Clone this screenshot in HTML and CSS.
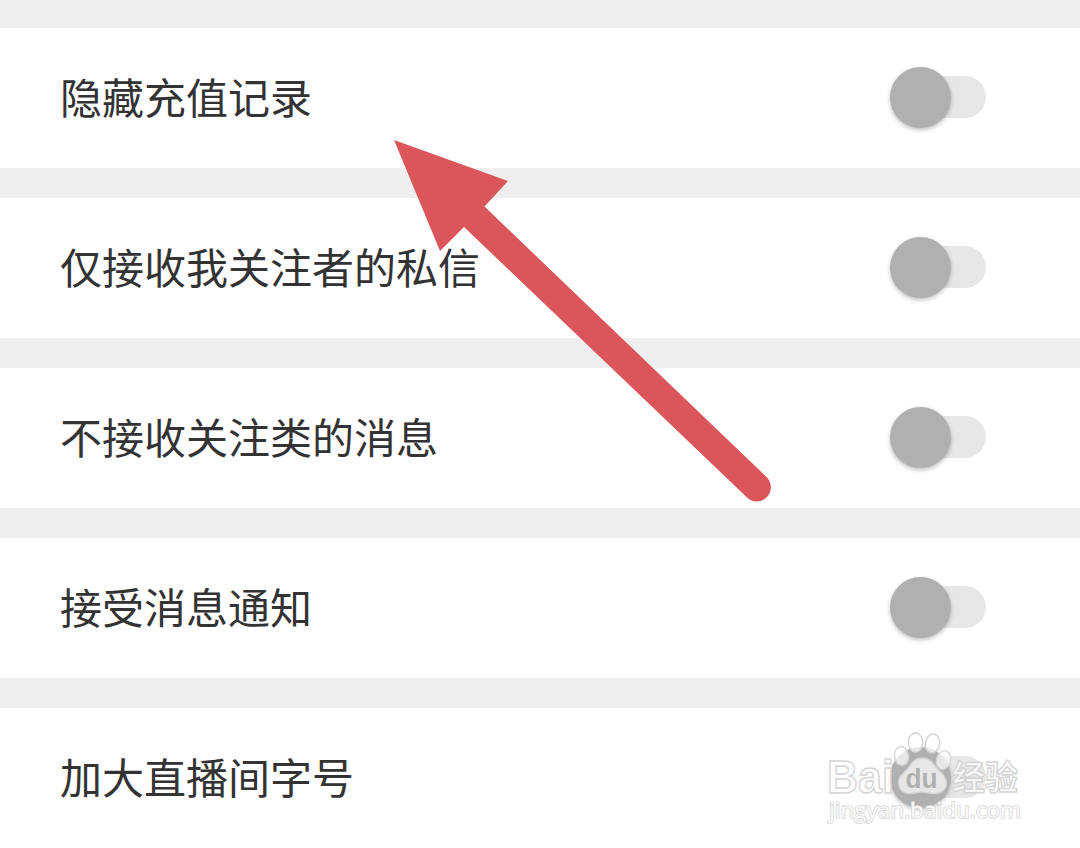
FILE: index.html
```html
<!DOCTYPE html>
<html lang="zh-CN">
<head>
<meta charset="utf-8">
<title>设置</title>
<link rel="stylesheet" href="styles.css">
</head>
<body>
<main class="settings">
  <div class="row"><span class="label">隐藏充值记录</span><span class="switch"><span class="thumb"></span></span></div>
  <div class="row"><span class="label">仅接收我关注者的私信</span><span class="switch"><span class="thumb"></span></span></div>
  <div class="row"><span class="label">不接收关注类的消息</span><span class="switch"><span class="thumb"></span></span></div>
  <div class="row"><span class="label">接受消息通知</span><span class="switch"><span class="thumb"></span></span></div>
  <div class="row"><span class="label">加大直播间字号</span><span class="switch"><span class="thumb"></span></span></div>
</main>
<svg class="arrow" width="1080" height="848" viewBox="0 0 1080 848">
  <path d="M394 140 508 181 484.500 206.500 766.500 477A14 14 0 0 1 747 497.500L464 227 440 251Z"/>
</svg>
<svg class="watermark" width="230" height="120" viewBox="0 0 230 120">
  <g class="mark">
    <text class="bai" x="17" y="73" textLength="67" lengthAdjust="spacingAndGlyphs">Bai</text>
    <text class="cn" x="142" y="70" textLength="66" lengthAdjust="spacingAndGlyphs">经验</text>
    <ellipse cx="91.500" cy="36" rx="7" ry="9.500" transform="rotate(-8 91.500 36)"/>
    <ellipse cx="105.500" cy="22.500" rx="7.200" ry="9.800"/>
    <ellipse cx="122.500" cy="23.500" rx="7.200" ry="9.500" transform="rotate(12 122.500 23.500)"/>
    <ellipse cx="133.500" cy="40" rx="7" ry="9.500" transform="rotate(15 133.500 40)"/>
    <path d="M112 38C103 38 101 45 97 49.500S88.500 56 88.500 63C88.500 69 93 73.500 100 73.500C105 73.500 107 72 112 72S119 73.500 125 73.500C132 73.500 136.500 69 136.500 63C136.500 56 131 53 127 48.500S121 38 112 38Z"/>
  </g>
  <text class="du" x="95.500" y="68" textLength="32" lengthAdjust="spacingAndGlyphs">du</text>
  <text class="url" x="19" y="98" textLength="192" lengthAdjust="spacingAndGlyphs">jingyan.baidu.com</text>
</svg>
</body>
</html>
```

FILE: styles.css
```css
body {
  margin: 0;
  width: 1080px;
  height: 848px;
  overflow: hidden;
  position: relative;
  background: #efefef;
  font-family: "Noto Sans CJK SC", sans-serif;
}
.settings {
  display: flex;
  flex-direction: column;
  gap: 30px;
  padding-top: 27.500px;
}
.row {
  display: flex;
  align-items: center;
  justify-content: space-between;
  box-sizing: border-box;
  height: 140px;
  padding: 0 94px 1px 60px;
  background: #fff;
}
.label {
  padding-bottom: 2px;
  font-size: 42px;
  line-height: 60px;
  color: #333;
}
.switch {
  display: flex;
  align-items: center;
  width: 90px;
  height: 42px;
  border-radius: 21px;
  background: #e7e7e7;
}
.thumb {
  width: 61px;
  height: 61px;
  margin: 1px 0 0 -6px;
  border-radius: 50%;
  background: #b0b0b0;
  box-shadow: 0 2px 4px rgba(0, 0, 0, .25);
}
.arrow {
  position: absolute;
  left: 0;
  top: 0;
  fill: #db565b;
}
.watermark {
  position: absolute;
  left: 810px;
  top: 720px;
}
.mark {
  fill: rgba(255, 255, 255, .7);
  stroke: #d4d4d4;
  stroke-width: 1.400px;
}
.bai, .du {
  font-family: "Liberation Sans", Arial, sans-serif;
  font-weight: bold;
}
.bai {
  font-size: 46px;
}
.cn {
  font-family: "Noto Sans CJK SC", sans-serif;
  font-weight: 700;
  font-size: 34px;
}
.du {
  font-size: 28px;
  fill: #b0b0b0;
}
.url {
  font-family: "Open Sans", sans-serif;
  font-size: 22px;
  fill: #fafafa;
  stroke: #d8d8d8;
  stroke-width: 1.700px;
  paint-order: stroke;
}
```
